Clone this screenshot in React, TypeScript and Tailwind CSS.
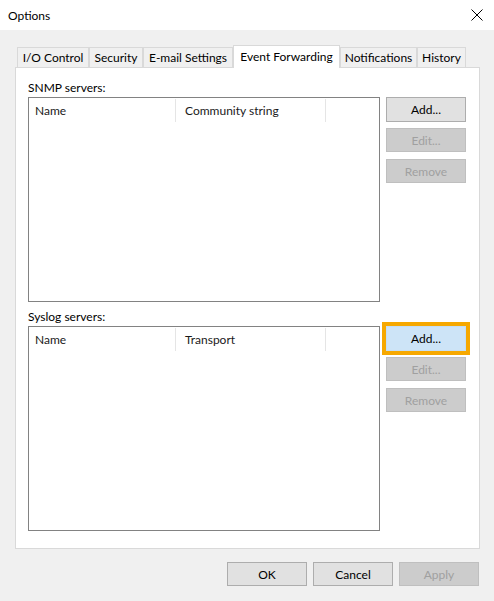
const tabs = [
  { label: "I/O Control", w: "w-[72px]" },
  { label: "Security", w: "w-[54px]" },
  { label: "E-mail Settings", w: "w-[90px]" },
  { label: "Event Forwarding", w: "w-[107px]", active: true },
  { label: "Notifications", w: "w-[77px]" },
  { label: "History", w: "w-[49px]" },
];

function Btn({ label, disabled, h = "h-[25px]" }: { label: string; disabled?: boolean; h?: string }) {
  return (
    <div
      className={`w-[80px] ${h} flex items-center justify-center border pt-px text-[12px] ${
        disabled ? "border-[#bfbfbf] bg-[#cccccc] text-[#a0a0a0]" : "border-[#adadad] bg-[#e1e1e1] text-black"
      }`}
    >
      {label}
    </div>
  );
}

function ListView({ second }: { second: string }) {
  return (
    <div className="h-[205px] w-[352px] border border-[#828282] bg-white">
      <div className="flex h-[24px] items-center pt-px text-[12px] text-[#1a1a1a]">
        <div className="flex h-full w-[147px] items-center border-r border-[#e5e5e5] pl-[6px]">Name</div>
        <div className="flex h-full w-[150px] items-center border-r border-[#e5e5e5] pl-[9px]">{second}</div>
      </div>
    </div>
  );
}

function Section({ title, second, focused }: { title: string; second: string; focused?: boolean }) {
  return (
    <div>
      <div className="mb-[2px] h-[16px] pt-px text-[12px] leading-[16px] text-black">{title}</div>
      <div className="flex gap-[6px]">
        <ListView second={second} />
        <div className="flex flex-col">
          {focused ? (
            <div className="-m-[4px] border-[4px] border-[#f6a800]">
              <div className="flex h-[25px] w-[80px] items-center justify-center border border-[#c4def5] bg-[#cde4f7] pt-px text-[12px] text-black">
                Add...
              </div>
            </div>
          ) : (
            <Btn label="Add..." />
          )}
          <div className="mt-[6px]">
            <Btn label="Edit..." disabled h="h-[24px]" />
          </div>
          <div className="mt-[7px]">
            <Btn label="Remove" disabled h="h-[24px]" />
          </div>
        </div>
      </div>
    </div>
  );
}

export default function App() {
  return (
    <div
      className="relative h-[601px] w-[494px] overflow-hidden bg-[#f0f0f0]"
      style={{ fontFamily: '"Segoe UI", Lato, "Noto Sans", sans-serif' }}
    >
      {/* Title bar */}
      <div className="flex h-[30px] items-center justify-between bg-white pl-[8px] pr-[10px]">
        <span className="pt-px text-[12px] text-black">Options</span>
        <svg width="12" height="12" viewBox="0 0 12 12" className="mr-[1px]">
          <path d="M0.5 0.5 L11.5 11.5 M11.5 0.5 L0.5 11.5" stroke="#000" strokeWidth="1" />
        </svg>
      </div>

      {/* Tabs */}
      <div className="ml-[17px] mt-[15px] flex h-[22px] items-end">
        {tabs.map((t) =>
          t.active ? (
            <div
              key={t.label}
              className={`${t.w} relative z-10 -mb-px flex h-[23px] items-center justify-center border border-b-0 border-[#d9d9d9] bg-white text-[12px] text-black`}
            >
              {t.label}
            </div>
          ) : (
            <div
              key={t.label}
              className={`${t.w} flex h-[20px] items-center justify-center border border-b-0 border-[#d9d9d9] bg-[#f0f0f0] pt-px text-[12px] text-black`}
            >
              {t.label}
            </div>
          )
        )}
      </div>

      {/* Panel */}
      <div className="ml-[15px] flex h-[482px] w-[465px] flex-col gap-[6px] border border-[#d9d9d9] bg-white px-[12px] pt-[11px]">
        <Section title="SNMP servers:" second="Community string" />
        <Section title="Syslog servers:" second="Transport" focused />
      </div>

      {/* Bottom buttons */}
      <div className="mr-[15px] mt-[13px] flex justify-end gap-[6px]">
        <Btn label="OK" h="h-[24px]" />
        <Btn label="Cancel" h="h-[24px]" />
        <Btn label="Apply" disabled h="h-[24px]" />
      </div>
    </div>
  );
}
